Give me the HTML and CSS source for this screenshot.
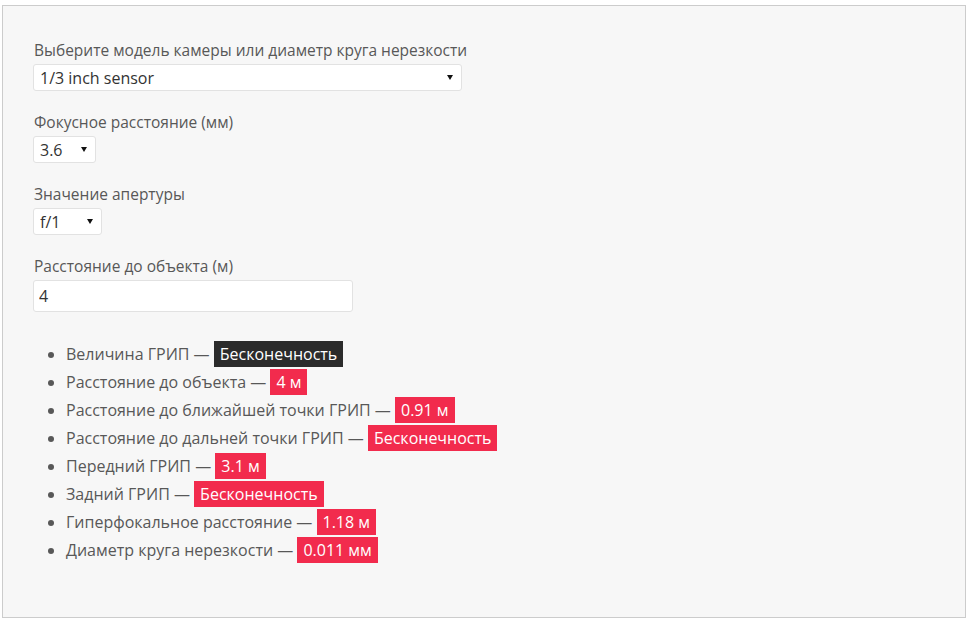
FILE: index.html
```html
<!DOCTYPE html>
<html lang="ru">
<head>
    <meta charset="UTF-8">
    <title>Калькулятор ГРИП</title>
    <link rel="stylesheet" href="styles.css">
</head>
<body>
    <div class="panel">
        <div class="field">
            <label for="camera">Выберите модель камеры или диаметр круга нерезкости</label>
            <span class="select-wrap">
                <select id="camera" class="wide">
                    <option>1/3 inch sensor</option>
                </select>
            </span>
        </div>

        <div class="field">
            <label for="focal">Фокусное расстояние (мм)</label>
            <span class="select-wrap">
                <select id="focal" class="focal">
                    <option>3.6</option>
                </select>
            </span>
        </div>

        <div class="field">
            <label for="aperture">Значение апертуры</label>
            <span class="select-wrap">
                <select id="aperture" class="aperture">
                    <option>f/1</option>
                </select>
            </span>
        </div>

        <div class="field">
            <label for="distance">Расстояние до объекта (м)</label>
            <input id="distance" type="text" value="4">
        </div>

        <!-- results -->
        <ul class="results">
            <li>Величина ГРИП — <span class="badge dark">Бесконечность</span></li>
            <li>Расстояние до объекта — <span class="badge">4 м</span></li>
            <li>Расстояние до ближайшей точки ГРИП — <span class="badge">0.91 м</span></li>
            <li>Расстояние до дальней точки ГРИП — <span class="badge">Бесконечность</span></li>
            <li>Передний ГРИП — <span class="badge">3.1 м</span></li>
            <li>Задний ГРИП — <span class="badge">Бесконечность</span></li>
            <li>Гиперфокальное расстояние — <span class="badge">1.18 м</span></li>
            <li>Диаметр круга нерезкости — <span class="badge">0.011 мм</span></li>
        </ul>
    </div>
</body>
</html>
```

FILE: styles.css
```css
body {
    margin: 0;
    background: #fff;
    font-family: "Open Sans", Arial, sans-serif;
    font-size: 15.5px;
    color: #585858;
}
.panel {
    box-sizing: border-box;
    height: 613px;
    margin: 5px 6px 0 2px;
    padding: 34px 30px;
    border: 1px solid #ccc;
    background: #f7f7f7;
}
.field {
    margin-bottom: 21px;
}
.field label {
    display: block;
    line-height: 21px;
    margin: 0 0 3px 1px;
}
.select-wrap {
    display: block;
    width: fit-content;
    position: relative;
}
.select-wrap::after {
    content: "";
    position: absolute;
    right: 9px;
    top: 11px;
    border-left: 3.5px solid transparent;
    border-right: 3.5px solid transparent;
    border-top: 5px solid #111;
}
select {
    appearance: none;
    display: block;
    box-sizing: border-box;
    height: 27px;
    padding: 0 6px;
    border: 1px solid #e2e2e2;
    border-radius: 3px;
    background: #fff;
    font-family: inherit;
    font-size: 16px;
    color: #333;
}
select.wide {
    width: 429px;
}
select.focal {
    width: 63px;
}
select.aperture {
    width: 69px;
}
input {
    display: block;
    box-sizing: border-box;
    width: 320px;
    height: 32px;
    padding: 0 5px;
    border: 1px solid #e2e2e2;
    border-radius: 3px;
    background: #fff;
    font-family: inherit;
    font-size: 16px;
    color: #333;
}
.results {
    margin: 28px 0 0;
    padding-left: 33px;
    font-size: 16px;
}
.results li {
    line-height: 28px;
}
.badge {
    display: inline-block;
    padding: 0 6px;
    line-height: 26px;
    background: #f22b4d;
    color: #fff;
}
.badge.dark {
    background: #2b2b2b;
}
```
